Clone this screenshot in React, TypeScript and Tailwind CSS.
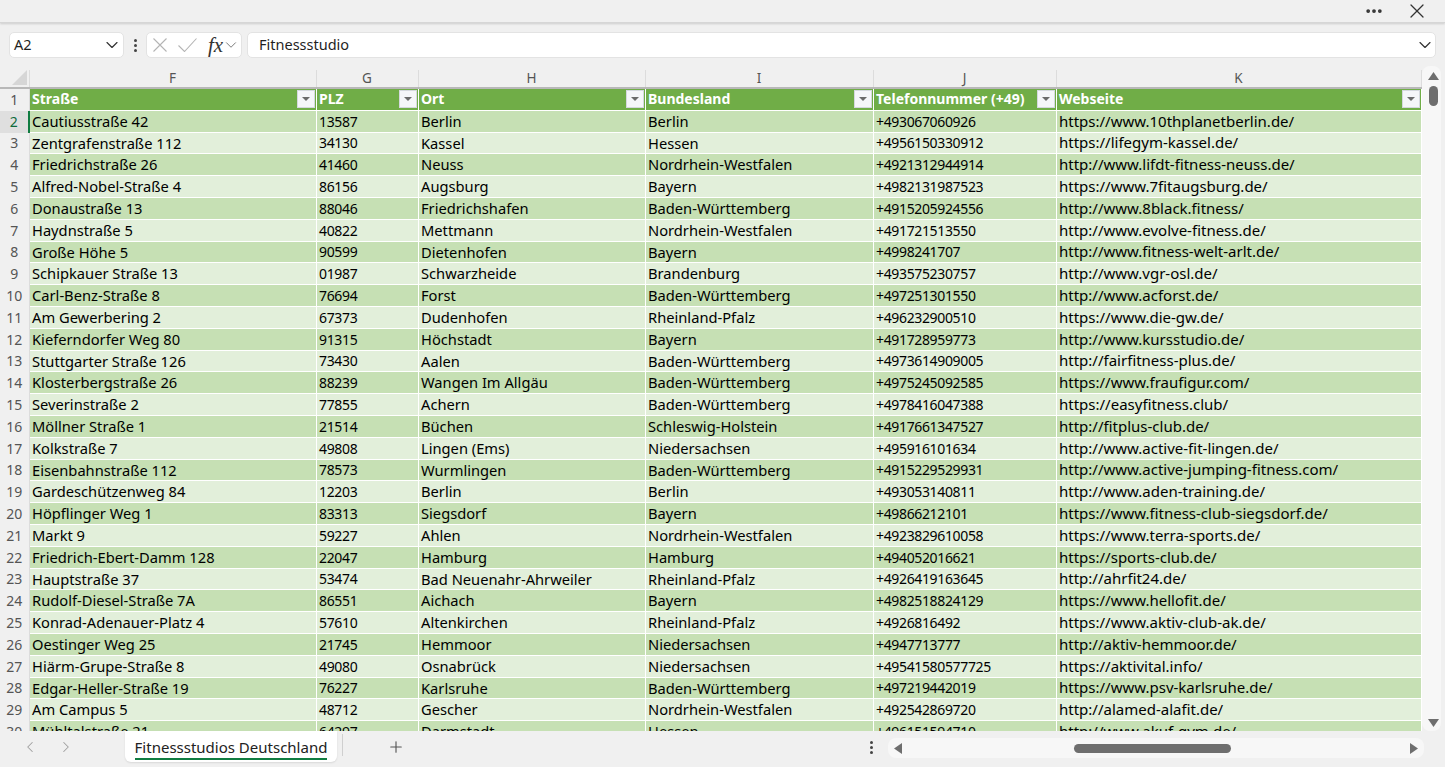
import React from 'react';
import { ChevronDown, ChevronLeft, ChevronRight, X, Plus, MoreHorizontal } from 'lucide-react';

const rows = [
  ['Cautiusstraße 42', '13587', 'Berlin', 'Berlin', '+493067060926', 'https://www.10thplanetberlin.de/'],
  ['Zentgrafenstraße 112', '34130', 'Kassel', 'Hessen', '+4956150330912', 'https://lifegym-kassel.de/'],
  ['Friedrichstraße 26', '41460', 'Neuss', 'Nordrhein-Westfalen', '+4921312944914', 'http://www.lifdt-fitness-neuss.de/'],
  ['Alfred-Nobel-Straße 4', '86156', 'Augsburg', 'Bayern', '+4982131987523', 'https://www.7fitaugsburg.de/'],
  ['Donaustraße 13', '88046', 'Friedrichshafen', 'Baden-Württemberg', '+4915205924556', 'http://www.8black.fitness/'],
  ['Haydnstraße 5', '40822', 'Mettmann', 'Nordrhein-Westfalen', '+491721513550', 'http://www.evolve-fitness.de/'],
  ['Große Höhe 5', '90599', 'Dietenhofen', 'Bayern', '+4998241707', 'http://www.fitness-welt-arlt.de/'],
  ['Schipkauer Straße 13', '01987', 'Schwarzheide', 'Brandenburg', '+493575230757', 'http://www.vgr-osl.de/'],
  ['Carl-Benz-Straße 8', '76694', 'Forst', 'Baden-Württemberg', '+497251301550', 'http://www.acforst.de/'],
  ['Am Gewerbering 2', '67373', 'Dudenhofen', 'Rheinland-Pfalz', '+496232900510', 'https://www.die-gw.de/'],
  ['Kieferndorfer Weg 80', '91315', 'Höchstadt', 'Bayern', '+491728959773', 'http://www.kursstudio.de/'],
  ['Stuttgarter Straße 126', '73430', 'Aalen', 'Baden-Württemberg', '+4973614909005', 'http://fairfitness-plus.de/'],
  ['Klosterbergstraße 26', '88239', 'Wangen Im Allgäu', 'Baden-Württemberg', '+4975245092585', 'https://www.fraufigur.com/'],
  ['Severinstraße 2', '77855', 'Achern', 'Baden-Württemberg', '+4978416047388', 'https://easyfitness.club/'],
  ['Möllner Straße 1', '21514', 'Büchen', 'Schleswig-Holstein', '+4917661347527', 'http://fitplus-club.de/'],
  ['Kolkstraße 7', '49808', 'Lingen (Ems)', 'Niedersachsen', '+495916101634', 'http://www.active-fit-lingen.de/'],
  ['Eisenbahnstraße 112', '78573', 'Wurmlingen', 'Baden-Württemberg', '+4915229529931', 'http://www.active-jumping-fitness.com/'],
  ['Gardeschützenweg 84', '12203', 'Berlin', 'Berlin', '+493053140811', 'http://www.aden-training.de/'],
  ['Höpflinger Weg 1', '83313', 'Siegsdorf', 'Bayern', '+49866212101', 'https://www.fitness-club-siegsdorf.de/'],
  ['Markt 9', '59227', 'Ahlen', 'Nordrhein-Westfalen', '+4923829610058', 'https://www.terra-sports.de/'],
  ['Friedrich-Ebert-Damm 128', '22047', 'Hamburg', 'Hamburg', '+494052016621', 'https://sports-club.de/'],
  ['Hauptstraße 37', '53474', 'Bad Neuenahr-Ahrweiler', 'Rheinland-Pfalz', '+4926419163645', 'http://ahrfit24.de/'],
  ['Rudolf-Diesel-Straße 7A', '86551', 'Aichach', 'Bayern', '+4982518824129', 'https://www.hellofit.de/'],
  ['Konrad-Adenauer-Platz 4', '57610', 'Altenkirchen', 'Rheinland-Pfalz', '+4926816492', 'https://www.aktiv-club-ak.de/'],
  ['Oestinger Weg 25', '21745', 'Hemmoor', 'Niedersachsen', '+4947713777', 'http://aktiv-hemmoor.de/'],
  ['Hiärm-Grupe-Straße 8', '49080', 'Osnabrück', 'Niedersachsen', '+49541580577725', 'https://aktivital.info/'],
  ['Edgar-Heller-Straße 19', '76227', 'Karlsruhe', 'Baden-Württemberg', '+497219442019', 'https://www.psv-karlsruhe.de/'],
  ['Am Campus 5', '48712', 'Gescher', 'Nordrhein-Westfalen', '+492542869720', 'http://alamed-alafit.de/'],
  ['Mühltalstraße 21', '64297', 'Darmstadt', 'Hessen', '+496151594710', 'http://www.akuf-gym.de/'],
];

const columns = ['F', 'G', 'H', 'I', 'J', 'K'];
const headers = ['Straße', 'PLZ', 'Ort', 'Bundesland', 'Telefonnummer (+49)', 'Webseite'];
const gridCols = 'grid grid-cols-[29.5px_287px_102px_227px_228px_183px_365px]';
const cellText = [
  'text-[14.7px]',
  'text-[14px] tracking-[-0.35px] pt-[1px]',
  'text-[14.7px]',
  'text-[14.7px]',
  'text-[14px] tracking-[-0.35px] pt-[1px]',
  'text-[15px]',
];

function FilterButton() {
  return (
    <div className="absolute right-[1px] top-[1px] w-[18px] h-[18px] bg-[#f5f6f9] border border-[#d5d8de] flex items-center justify-center">
      <svg width="8" height="4" viewBox="0 0 8 4"><path d="M0 0h8L4 4z" fill="#6b6b6b" /></svg>
    </div>
  );
}

function Dots() {
  return (
    <>
      <span className="w-[3px] h-[3px] rounded-full bg-[#444]" />
      <span className="w-[3px] h-[3px] rounded-full bg-[#444]" />
      <span className="w-[3px] h-[3px] rounded-full bg-[#444]" />
    </>
  );
}

export default function App() {
  return (
    <div className="w-[1445px] h-[767px] overflow-hidden bg-[#f0f0f0] flex flex-col text-[#1f1f1f] font-['Noto_Sans','Open_Sans',sans-serif]">
      {/* title strip */}
      <div className="h-[23px] shrink-0 flex items-center justify-end pr-[16px] gap-[21px] border-b border-[#d6d6d6] shadow-[0_1px_2px_rgba(0,0,0,0.15)]">
        <MoreHorizontal className="w-[20px] h-[20px] text-[#333]" strokeWidth={2.5} />
        <X className="w-[24px] h-[24px] text-[#333]" strokeWidth={1.25} />
      </div>

      {/* formula bar */}
      <div className="h-[26px] shrink-0 mt-[9px] ml-[9px] mr-[9px] flex items-stretch text-[14.5px]">
        <div className="w-[115px] bg-white rounded-[5px] border border-[#e3e3e3] flex items-center justify-between pl-[4px] pr-[1px]">
          <span>A2</span>
          <ChevronDown className="w-[20px] h-[20px] text-[#333]" strokeWidth={1.4} />
        </div>
        <div className="w-[22px] flex flex-col items-center justify-center gap-[2px]">
          <Dots />
        </div>
        <div className="w-[96px] bg-white rounded-[5px] border border-[#e3e3e3] flex items-center pl-[6px]">
          <svg width="14" height="14" viewBox="0 0 14 14"><path d="M0.5 0.5l13 13M13.5 0.5l-13 13" stroke="#b4b4b4" strokeWidth="1.1" fill="none" /></svg>
          <svg className="ml-[11px]" width="19" height="14" viewBox="0 0 19 14"><path d="M0.5 7.5l6 6L18.5 0.5" stroke="#b4b4b4" strokeWidth="1.1" fill="none" /></svg>
          <span className="ml-[11px] font-['Liberation_Serif',serif] italic text-[21px] leading-none text-[#333]">fx</span>
          <ChevronDown className="w-[18px] h-[18px] -ml-[1px] text-[#777]" strokeWidth={1.3} />
        </div>
        <div className="flex-1 ml-[5px] bg-white rounded-[5px] border border-[#e3e3e3] flex items-center justify-between pl-[11px]">
          <span>Fitnessstudio</span>
          <ChevronDown className="w-[20px] h-[20px] text-[#333]" strokeWidth={1.4} />
        </div>
      </div>

      {/* sheet */}
      <div className="h-[661px] mt-[12px] shrink-0 flex">
        <div className="w-[1422px] overflow-hidden h-[661px] text-[14px] leading-none">
          <div className={`${gridCols} h-[19px] border-b-2 border-[#b8b8b8] bg-[#f0f0f0] text-[#555] text-[13.5px]`}>
            <div className="relative border-r border-[#dcdcdc]">
              <svg className="absolute right-[2px] bottom-[2px]" width="15" height="15" viewBox="0 0 15 15"><path d="M15 0v15H0z" fill="#d6d6d6" /></svg>
            </div>
            {columns.map((c) => (
              <div key={c} className="border-r border-[#dcdcdc] flex items-center justify-center">{c}</div>
            ))}
          </div>

          <div className={`${gridCols} h-[21.8px] text-[14px]`}>
            <div className="text-[#555] flex items-center justify-center border-r border-[#dcdcdc]">1</div>
            {headers.map((h) => (
              <div key={h} className="relative bg-[#70ad47] text-white font-bold border-r border-b-[1.5px] border-white flex items-center pl-[2.5px]">
                {h}
                <FilterButton />
              </div>
            ))}
          </div>

          {rows.map((row, i) => (
            <div key={i} className={`${gridCols} h-[21.8px]`}>
              <div className={`flex items-center justify-center ${i === 0 ? 'bg-[#dfdfdf] text-[#0f6b3c] border-r-2 border-[#107c41]' : 'text-[#555] border-r border-[#dcdcdc]'}`}>{i + 2}</div>
              {row.map((cell, j) => (
                <div
                  key={j}
                  className={`flex items-center pl-[2.5px] border-r border-b-[1.5px] border-white whitespace-nowrap overflow-hidden text-black ${cellText[j]} ${i % 2 === 0 ? 'bg-[#c6e0b4]' : 'bg-[#e2efda]'}`}
                >
                  {cell}
                </div>
              ))}
            </div>
          ))}
        </div>

        {/* vertical scrollbar */}
        <div className="w-[19px] h-[665px] -mt-[4px] bg-[#f7f7f7] rounded-[8px] relative">
          <svg className="absolute left-[6px] top-[6px]" width="11" height="8" viewBox="0 0 11 8"><path d="M5.5 0L11 8H0z" fill="#6e6e6e" /></svg>
          <div className="absolute left-[7px] top-[20px] w-[9px] h-[20px] rounded-full bg-[#6e6e6e]" />
          <svg className="absolute left-[6px] bottom-[4px]" width="11" height="8" viewBox="0 0 11 8"><path d="M0 0h11L5.5 8z" fill="#6e6e6e" /></svg>
        </div>
      </div>

      {/* sheet tabs */}
      <div className="h-[36px] shrink-0 bg-[#f0f0f0] flex items-start">
        <div className="w-[125px] h-[31px] flex items-center pl-[21px] gap-[18px] text-[#a0a0a0]">
          <ChevronLeft className="w-[18px] h-[18px]" strokeWidth={1.4} />
          <ChevronRight className="w-[18px] h-[18px]" strokeWidth={1.4} />
        </div>
        <div className="w-[212px] h-[31px] bg-white rounded-b-[6px] flex flex-col items-center pt-[6px] shadow-[0_1px_2px_rgba(0,0,0,0.1)]">
          <span className="text-[15px] leading-[20px] text-[#222] border-b-2 border-[#107c41] h-[23px]">Fitnessstudios Deutschland</span>
        </div>
        <div className="w-[1px] h-[22px] mt-[3px] ml-[5px] bg-[#cfcfcf]" />
        <Plus className="w-[18px] h-[18px] ml-[44px] mt-[7px] text-[#555]" strokeWidth={1.5} />
        <div className="ml-[465px] mt-[10px] w-[3px] flex flex-col gap-[2px] items-center">
          <Dots />
        </div>
        <div className="ml-[15px] mt-[7px] w-[536px] h-[20px] rounded-[8px] bg-[#f7f7f7] flex items-center justify-between px-[6px]">
          <svg width="8" height="11" viewBox="0 0 8 11"><path d="M8 0v11L0 5.5z" fill="#6e6e6e" /></svg>
          <div className="w-[157px] h-[9px] rounded-full bg-[#6e6e6e] ml-[168px]" />
          <svg className="ml-[176px]" width="8" height="11" viewBox="0 0 8 11"><path d="M0 0v11l8-5.5z" fill="#6e6e6e" /></svg>
        </div>
      </div>
    </div>
  );
}
